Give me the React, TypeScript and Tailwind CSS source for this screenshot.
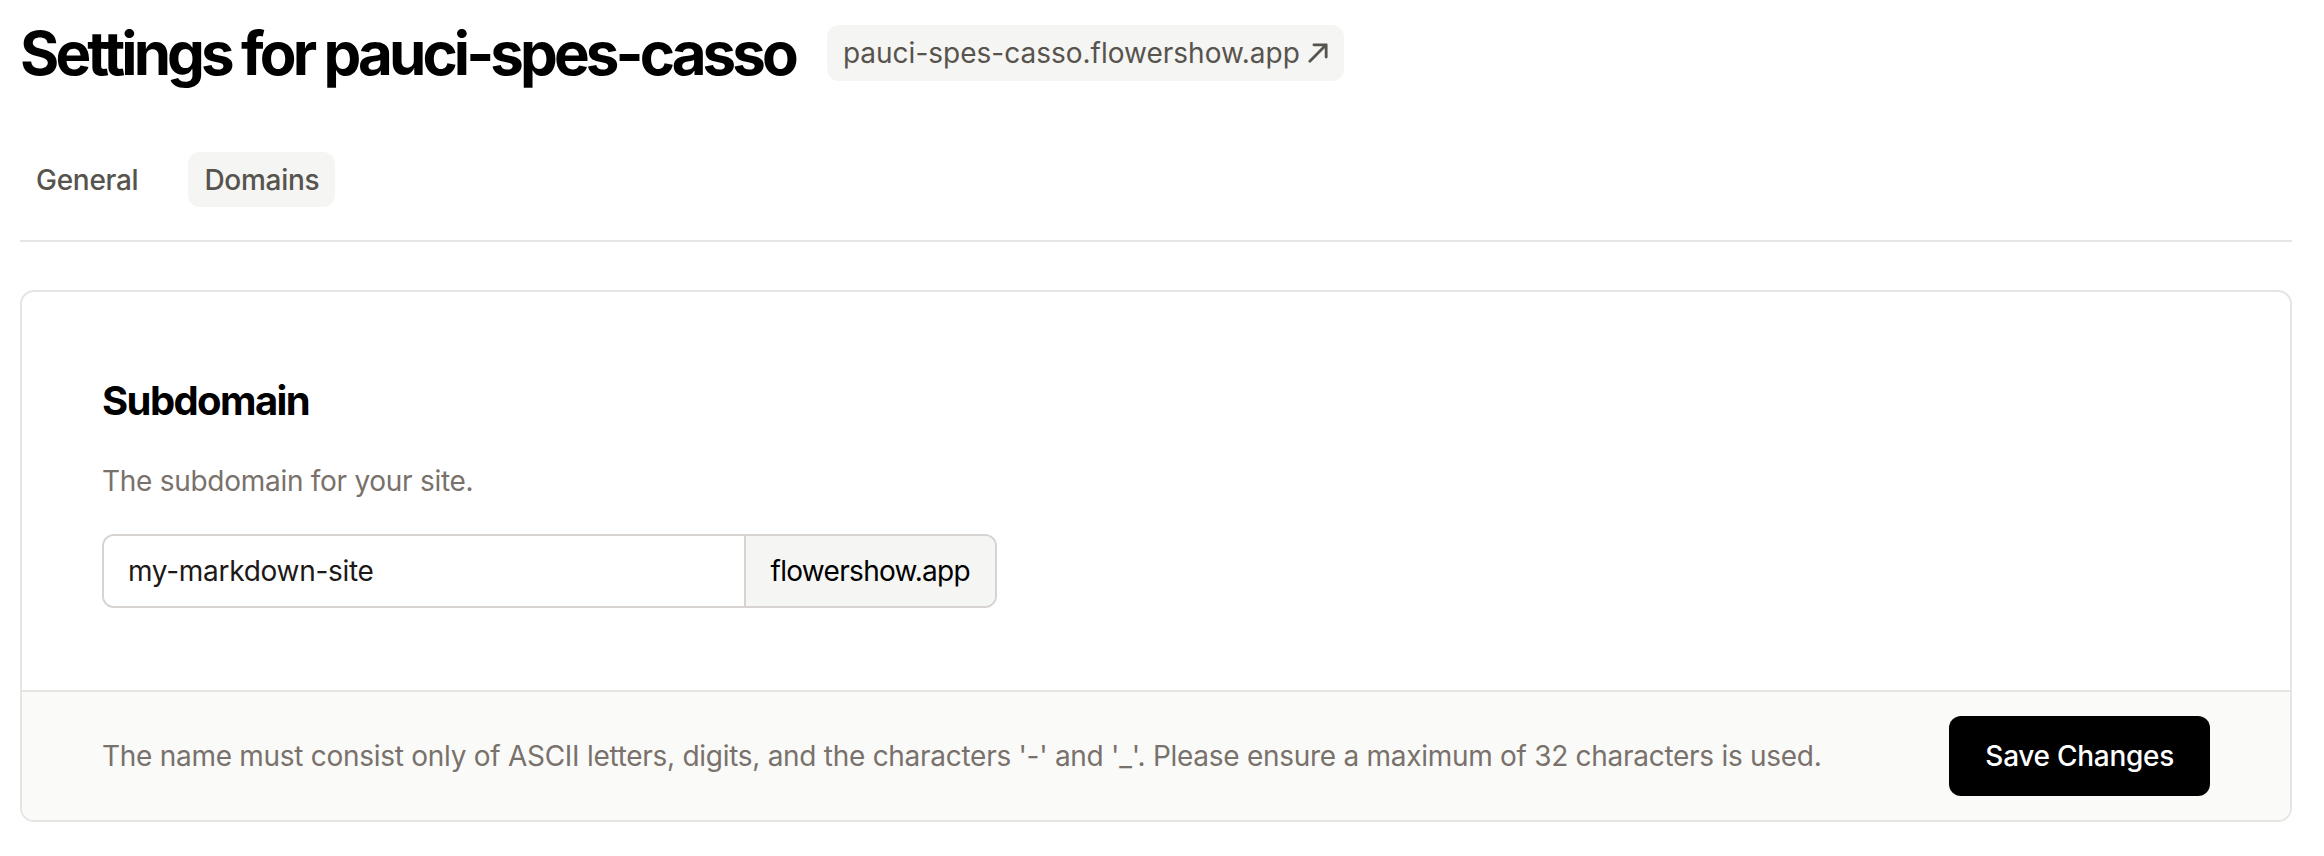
const tabs = [
  { label: "General", active: false },
  { label: "Domains", active: true },
];

function ArrowUpRight() {
  return (
    <svg viewBox="0 0 24 24" className="h-[28px] w-[28px]" fill="none" stroke="currentColor" strokeWidth={2.4}>
      <path strokeLinecap="round" strokeLinejoin="round" d="M5 19 19 5m0 0H8.5M19 5v10.5" />
    </svg>
  );
}

export default function App() {
  return (
    <div className="min-h-screen bg-white pl-[20px] pr-[32px] pt-[17px] font-['Inter',sans-serif] text-stone-900">
      <header className="flex items-center gap-[32px]">
        <h1 className="font-['Inter',sans-serif] text-[60px] font-bold leading-[72px] tracking-[-0.065em] text-black">
          Settings for pauci-spes-casso
        </h1>
        <a
          href="#"
          className="flex h-[56px] items-center gap-[4px] rounded-[12px] bg-stone-100 pl-[16px] pr-[12px] text-[28px] leading-[40px] text-stone-600"
        >
          pauci-spes-casso.flowershow.app
          <ArrowUpRight />
        </a>
      </header>

      <nav className="mt-[63px] flex gap-[34px] border-b-2 border-stone-200 pb-[33px]">
        {tabs.map((t) => (
          <button
            key={t.label}
            className={`h-[55px] rounded-[12px] px-[16px] text-[28px] font-medium leading-[40px] tracking-[-0.01em] text-stone-600 ${
              t.active ? "bg-stone-100" : ""
            }`}
          >
            {t.label}
          </button>
        ))}
      </nav>

      <section className="mt-[48px] overflow-hidden rounded-[14px] border-2 border-stone-200">
        <div className="px-[80px] pb-[82px] pt-[81px]">
          <h2 className="font-['Inter',sans-serif] text-[40px] font-bold leading-[56px] tracking-[-0.04em] text-black">
            Subdomain
          </h2>
          <p className="mt-[32px] text-[28px] leading-[40px] tracking-[-0.01em] text-stone-500">
            The subdomain for your site.
          </p>
          <div className="mt-[33px] flex h-[74px] w-[895px] overflow-hidden rounded-[12px] border-2 border-stone-300">
            <input
              defaultValue="my-markdown-site"
              className="min-w-0 flex-1 bg-white px-[24px] text-[28px] tracking-[-0.01em] text-stone-900 outline-none"
            />
            <span className="flex items-center border-l-2 border-stone-300 bg-stone-100 px-[25px] text-[28px] tracking-[-0.025em] text-black">
              flowershow.app
            </span>
          </div>
        </div>
        <div className="flex items-center justify-between border-t-2 border-stone-200 bg-stone-50 px-[80px] py-[24px]">
          <p className="text-[28px] leading-[40px] tracking-[-0.01em] text-stone-500">
            The name must consist only of ASCII letters, digits, and the characters '-' and '_'. Please ensure a
            maximum of 32 characters is used.
          </p>
          <button className="h-[80px] rounded-[12px] bg-black px-[36px] text-[28px] font-medium tracking-[-0.01em] text-white">
            Save Changes
          </button>
        </div>
      </section>
    </div>
  );
}
